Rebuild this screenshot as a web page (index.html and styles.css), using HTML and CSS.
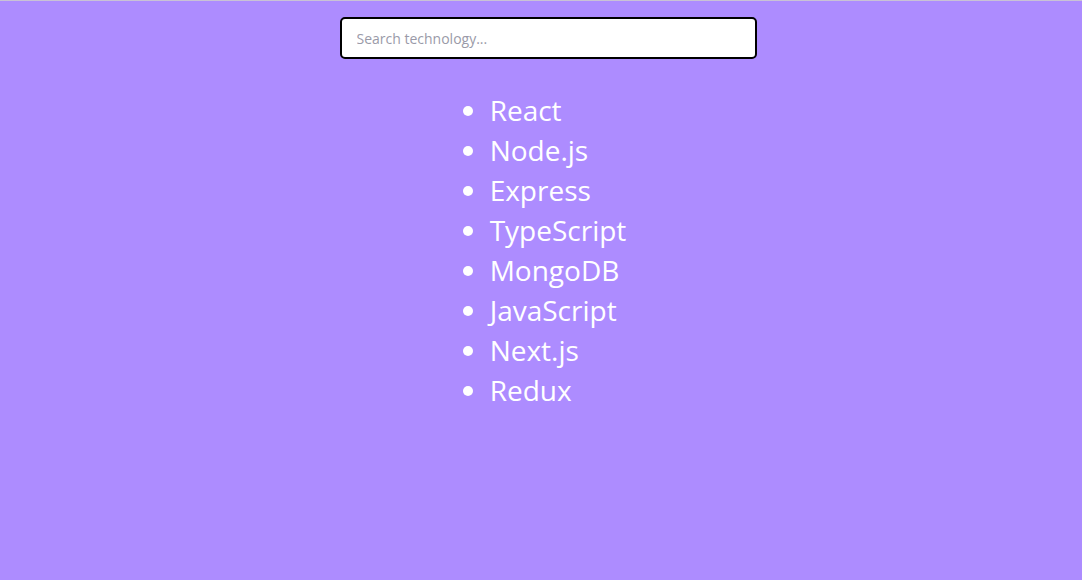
FILE: index.html
```html
<!DOCTYPE html>
<html lang="en">
<head>
<meta charset="utf-8">
<title>Tech search</title>
<link rel="stylesheet" href="styles.css">
</head>
<body>
<div class="app">
  <input class="search" type="text" placeholder="Search technology...">
  <ul class="tech-list">
    <li>React</li>
    <li>Node.js</li>
    <li>Express</li>
    <li>TypeScript</li>
    <li>MongoDB</li>
    <li>JavaScript</li>
    <li>Next.js</li>
    <li>Redux</li>
  </ul>
</div>
</body>
</html>
```

FILE: styles.css
```css
html, body {
  margin: 0;
  height: 100%;
}
body {
  background: #ad8cff;
  border-top: 1px solid #c9c2d6;
  box-sizing: border-box;
  font-family: "Open Sans", "Noto Sans", sans-serif;
}
.app {
  display: flex;
  flex-direction: column;
  align-items: center;
  padding: 16px 0 0 14px;
}
.search {
  box-sizing: border-box;
  width: 417px;
  height: 42px;
  border: 2px solid #000;
  border-radius: 5px;
  background: #fff;
  padding: 0 15px;
  font-family: "Open Sans", sans-serif;
  font-size: 14px;
  color: #333;
  outline: none;
}
.search::placeholder {
  color: #9a9aa8;
}
.tech-list {
  margin: 31px 0 0 -20px;
  padding-left: 40px;
  color: #fff;
  font-size: 28px;
  line-height: 40px;
}
```
